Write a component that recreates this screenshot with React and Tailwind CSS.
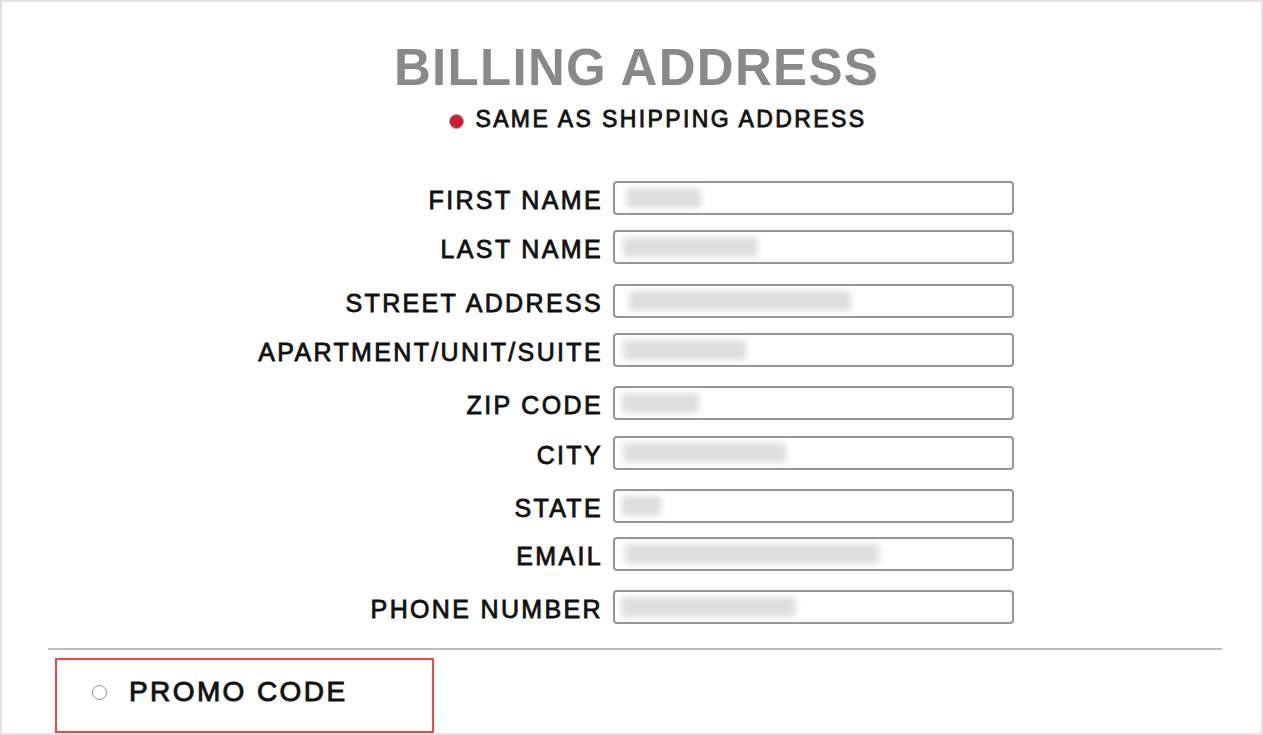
import React from "react";

const rows = [
  { label: "FIRST NAME", mt: "mt-0", blur: "w-[75px] ml-[11px]" },
  { label: "LAST NAME", mt: "mt-[15px]", blur: "w-[135px] ml-[8px]" },
  { label: "STREET ADDRESS", mt: "mt-[20px]", blur: "w-[222px] ml-[14px]" },
  { label: "APARTMENT/UNIT/SUITE", mt: "mt-[15px]", blur: "w-[123px] ml-[8px]" },
  { label: "ZIP CODE", mt: "mt-[19px]", blur: "w-[77px] ml-[7px]" },
  { label: "CITY", mt: "mt-[16px]", blur: "w-[163px] ml-[8px]" },
  { label: "STATE", mt: "mt-[19px]", blur: "w-[39px] ml-[7px]" },
  { label: "EMAIL", mt: "mt-[14px]", blur: "w-[254px] ml-[10px]" },
  { label: "PHONE NUMBER", mt: "mt-[19px]", blur: "w-[175px] ml-[6px]" },
];

export default function App() {
  return (
    <div
      className="w-[1263px] h-[735px] border-2 border-[#e7e1df] bg-white overflow-hidden"
      style={{ fontFamily: '"Liberation Sans", Arial, sans-serif' }}
    >
      <div className="pt-[40px] pl-[10px] text-center">
        <h1 className="text-[51px] leading-none font-bold text-[#898989] tracking-[1.3px]">
          BILLING ADDRESS
        </h1>
      </div>
      <div className="mt-[15px] h-[23px] flex items-center justify-center pl-[53px]">
        <span className="w-[15px] h-[15px] rounded-full bg-[#cf1a30] border-[1.5px] border-[#a3a3a3] mt-[4px] mr-[11px] shrink-0" />
        <span className="text-[23px] leading-none font-normal text-[#111] tracking-[2.4px] [-webkit-text-stroke:0.8px_#111]">
          SAME AS SHIPPING ADDRESS
        </span>
      </div>

      <div className="mt-[50px]">
        {rows.map((r) => (
          <div key={r.label} className={`flex items-center h-[34px] ${r.mt}`}>
            <div className="w-[601px] text-right mt-[5px] text-[25px] leading-none font-normal text-[#111] tracking-[2.35px] whitespace-nowrap [-webkit-text-stroke:0.8px_#111]">
              {r.label}
            </div>
            <div className="ml-[10px] w-[401px] h-[34px] border-2 border-[#959595] rounded-[4px] bg-white overflow-hidden flex items-center">
              <div className={`h-[20px] bg-[#dedede] blur-[3px] rounded-sm ${r.blur}`} />
            </div>
          </div>
        ))}
      </div>

      <div className="mt-[24px] ml-[46px] w-[1174px] h-[2px] bg-[#bcbcbc]" />

      <div className="mt-[8px] ml-[53px] w-[379px] h-[75px] border-2 border-[#f14747]">
        <div className="pt-[18px] pl-[35px] flex items-center h-[46px]">
          <span className="w-[15px] h-[15px] rounded-full border-[1.5px] border-[#8e8e8e] bg-white mr-[22px] shrink-0" />
          <span className="text-[28px] leading-none font-normal text-[#111] tracking-[2.4px] [-webkit-text-stroke:0.9px_#111]">
            PROMO CODE
          </span>
        </div>
      </div>
    </div>
  );
}
